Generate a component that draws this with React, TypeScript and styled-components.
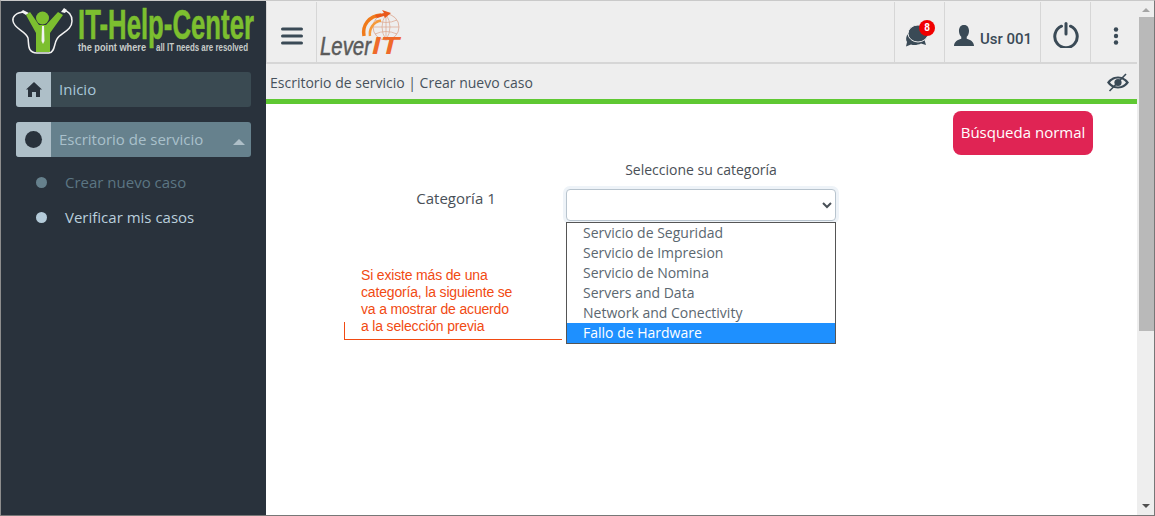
import styled, { createGlobalStyle } from 'styled-components'

const GlobalStyle = createGlobalStyle`
	html, body {
		margin: 0;
		padding: 0;
		overflow: hidden;
		background: #fff;
	}
	* {
		box-sizing: border-box;
	}
`

const Frame = styled.div`
	width: 1155px;
	height: 516px;
	display: flex;
	overflow: hidden;
	font-family: 'Open Sans', sans-serif;
	font-size: 14px;
	color: #495057;
	border-top: 1px solid #c9c9c9;
	border-left: 1px solid #8d8d8d;
	border-right: 1px solid #777;
	border-bottom: 1px solid #777;
`

const Sidebar = styled.aside`
	width: 265px;
	flex: none;
	background: #29323c;
	display: flex;
	flex-direction: column;
`

const LogoBox = styled.div`
	height: 71px;
`

const MenuItem = styled.div<{ $active?: boolean }>`
	display: flex;
	align-items: center;
	height: 35px;
	margin: 0 15px 15px 15px;
	border-radius: 3px;
	overflow: hidden;
	background: ${({ $active }) => ($active ? '#66818d' : '#3a4a52')};
	color: ${({ $active }) => ($active ? '#a9c0cb' : '#a8c6d8')};
	font-size: 15px;
`

const MenuIcon = styled.span`
	width: 35px;
	height: 35px;
	flex: none;
	background: #aebfc8;
	display: flex;
	align-items: center;
	justify-content: center;
`

const MenuDisc = styled.span`
	width: 17px;
	height: 17px;
	border-radius: 50%;
	background: #29323c;
`

const MenuLabel = styled.span`
	flex: 1;
	padding: 0 0 2px 8px;
`

const MenuCaret = styled.span`
	width: 0;
	height: 0;
	margin: 4px 6px 0 0;
	border-left: 6px solid transparent;
	border-right: 6px solid transparent;
	border-bottom: 6px solid #aebfc8;
`

const SubMenu = styled.div`
	display: flex;
	flex-direction: column;
	gap: 15px;
	padding: 0 0 0 35px;
`

const SubItem = styled.div<{ $dim?: boolean }>`
	display: flex;
	align-items: center;
	height: 20px;
	gap: 18px;
	font-size: 15px;
	color: ${({ $dim }) => ($dim ? '#5c7683' : '#b9cfdc')};
`

const SubDot = styled.span<{ $dim?: boolean }>`
	width: 11px;
	height: 11px;
	border-radius: 50%;
	background: ${({ $dim }) => ($dim ? '#66818d' : '#b4cbd9')};
`

const Main = styled.main`
	flex: 1;
	display: flex;
	flex-direction: column;
	min-width: 0;
`

const TopBar = styled.header`
	height: 63px;
	flex: none;
	display: flex;
	align-items: stretch;
	background: #eee;
	border-bottom: 2px solid #d6d6d6;
`

const TopCell = styled.div<{ $width: number; $shift?: number }>`
	width: ${({ $width }) => $width}px;
	flex: none;
	margin-top: 1px;
	padding: 7px 0 0 ${({ $shift }) => $shift ?? 0}px;
	border-left: 1px solid #d6d6d6;
	display: flex;
	align-items: center;
	justify-content: center;
	color: #3a4a56;
`

const LogoCell = styled.div`
	flex: 1;
	margin-top: 1px;
	border-left: 1px solid #d6d6d6;
	display: flex;
	align-items: center;
`

const BellWrap = styled.span`
	position: relative;
	display: flex;
	margin-right: 6px;
`

const Badge = styled.span`
	position: absolute;
	top: -5px;
	left: 14px;
	width: 16px;
	height: 16px;
	border-radius: 50%;
	background: #f00000;
	color: #fff;
	font-family: 'Roboto', sans-serif;
	font-size: 10px;
	font-weight: 700;
	line-height: 16px;
	text-align: center;
`

const UserName = styled.span`
	font-family: 'Roboto', sans-serif;
	font-size: 15px;
	font-weight: 500;
	margin-left: 5px;
	margin-top: 6px;
`

const PowerWrap = styled.span`
	display: flex;
	margin-bottom: 2px;
`

const Crumbs = styled.div`
	height: 35px;
	flex: none;
	background: #eee;
	display: flex;
	align-items: center;
	justify-content: space-between;
	padding: 2px 8px 0 4px;
	font-size: 14px;
	color: #47525c;
`

const GreenRule = styled.div`
	height: 5px;
	flex: none;
	background: #5fc832;
`

const Content = styled.section`
	flex: 1;
	background: #fff;
`

const ActionRow = styled.div`
	display: flex;
	justify-content: flex-end;
	padding: 7px 44px 0 0;
`

const SearchButton = styled.button`
	width: 140px;
	height: 44px;
	border: none;
	border-radius: 8px;
	background: #e02454;
	color: #fff;
	font-family: 'Open Sans', sans-serif;
	font-size: 15px;
	padding: 0 0 2px;
`

const FormGrid = styled.div`
	display: grid;
	grid-template-columns: 222px 270px;
	margin: 5px 0 0 78px;
`

const FormTitle = styled.div`
	grid-column: 2;
	height: 29px;
	text-align: center;
	font-size: 14px;
	line-height: 20px;
	color: #495057;
`

const FieldLabel = styled.label`
	text-align: center;
	font-size: 15px;
	line-height: 18px;
	color: #495057;
	padding-left: 2px;
`

const Select = styled.select`
	display: block;
	width: 270px;
	height: 32px;
	background-color: #fff;
	border: 1px solid #b8c4ce;
	border-radius: 4px;
	box-shadow: 0 0 0 3px #eef3f8;
	font-family: 'Open Sans', sans-serif;
	font-size: 14px;
	color: #495057;
	outline: none;
`

const Note = styled.div`
	position: relative;
	height: 122px;
	margin-top: 2px;
`

const NoteText = styled.p`
	position: absolute;
	left: 17px;
	top: 44px;
	margin: 0;
	font-family: 'Liberation Sans', sans-serif;
	font-size: 14px;
	letter-spacing: -0.17px;
	line-height: 17px;
	color: #f14a12;
	white-space: pre;
`

const NoteLine = styled.span`
	position: absolute;
	left: 0;
	top: 99px;
	width: 218px;
	height: 18px;
	border-left: 1px solid #f14a12;
	border-bottom: 1px solid #f14a12;
`

const OptionList = styled.ul`
	list-style: none;
	margin: 1px 0 0;
	padding: 0;
	width: 270px;
	height: 122px;
	border: 1px solid #555;
	background: #fff;
`

const OptionRow = styled.li<{ $selected?: boolean }>`
	height: 20px;
	line-height: 20px;
	padding-left: 16px;
	font-size: 14px;
	background: ${({ $selected }) => ($selected ? '#1e90ff' : 'transparent')};
	color: ${({ $selected }) => ($selected ? '#fff' : '#5b6770')};
`

const ScrollBar = styled.div`
	width: 17px;
	flex: none;
	margin-top: -1px;
	background: #eeeeee;
	display: flex;
	flex-direction: column;
	align-items: center;
`

const ScrollArrow = styled.span<{ $down?: boolean }>`
	width: 0;
	height: 0;
	margin: ${({ $down }) => ($down ? 'auto 0 7px 0' : '8px 0 5px 0')};
	border-left: 4px solid transparent;
	border-right: 4px solid transparent;
	${({ $down }) => ($down ? 'border-top: 4px solid #505050;' : 'border-bottom: 4px solid #a5a5a5;')}
`

const ScrollThumb = styled.span`
	width: 15px;
	height: 314px;
	background: #b9b9b9;
	margin-left: 2px;
`

const ITLogo = () => (
	<svg width='265' height='60' viewBox='1 1 265 60'>
		<path
			d='M25 12 C16 12 12 17 13 21 C14 29 26 31 28 38 C29 44 27 53 37 53 L49 53 C55 53 54 43 57 39 C60 33 72 31 72 21 C72 14 68 11 63 10'
			fill='none'
			stroke='#f2f2f2'
			strokeWidth='1.5'
		/>
		<path d='M23 10 L29 13 L26 15 L21 12 Z M64 8 L61 12 L65 13 L67 10 Z' fill='#f2f2f2' />
		<circle cx='42.5' cy='18' r='6.5' fill='#7cbf2f' />
		<path d='M26 15 L30 12 L39 25 L46 25 L58 12 L63 15 L50 33 L50 52 L36 52 L36 33 Z' fill='#7cbf2f' />
		<path d='M42 26 L44 26 L44.5 41 L43 44 L41.5 41 Z' fill='#f2f2f2' />
		<text
			x='78'
			y='39'
			fontFamily='Liberation Sans'
			fontWeight='700'
			fontSize='43'
			fill='#7cbf2f'
			stroke='#7cbf2f'
			strokeWidth='0.6'
			textLength='176'
			lengthAdjust='spacingAndGlyphs'
		>
			IT-Help-Center
		</text>
		<text
			x='78'
			y='51'
			fontFamily='Liberation Sans'
			fontWeight='700'
			fontSize='10.5'
			fill='#c7ccc9'
			textLength='68'
			lengthAdjust='spacingAndGlyphs'
		>
			the point where
		</text>
		<text
			x='156'
			y='51'
			fontFamily='Liberation Sans'
			fontWeight='700'
			fontSize='10.5'
			fill='#c7ccc9'
			textLength='92'
			lengthAdjust='spacingAndGlyphs'
		>
			all IT needs are resolved
		</text>
	</svg>
)

const LeverLogo = () => (
	<svg width='90' height='58' viewBox='317 3 90 58'>
		<circle cx='386' cy='27' r='13' fill='none' stroke='#dba58d' strokeWidth='0.8' />
		<path
			d='M373 27 H399 M386 14 V40 M375 20 Q386 25 397 20 M375 34 Q386 29 397 34 M386 14 Q378 27 386 40 M386 14 Q394 27 386 40'
			fill='none'
			stroke='#dba58d'
			strokeWidth='0.7'
		/>
		<path d='M364 36 C362 25 369 16 381 15' fill='none' stroke='#f07a1a' strokeWidth='3.5' />
		<path d='M370 36 C369 29 373 22 381 20.5' fill='none' stroke='#f59a3a' strokeWidth='2.5' />
		<path d='M375 15 L384 13 L382 10 L391 13 L385 18 L384 16 L377 18 Z' fill='#e9591c' />
		<text
			x='320'
			y='55'
			fontFamily='Liberation Sans'
			fontStyle='italic'
			fontSize='25'
			fill='#5a5a5a'
			stroke='#5a5a5a'
			strokeWidth='0.5'
			textLength='51'
			lengthAdjust='spacingAndGlyphs'
		>
			Lever
		</text>
		<text
			x='372'
			y='54'
			fontFamily='Liberation Sans'
			fontStyle='italic'
			fontWeight='700'
			fontSize='24'
			fill='#ef6a2a'
			textLength='27'
			lengthAdjust='spacingAndGlyphs'
		>
			IT
		</text>
	</svg>
)

const HomeIcon = () => (
	<svg width='16' height='15' viewBox='0 0 16 15'>
		<path d='M8 0 L16 7.5 L14 7.5 L14 15 L10 15 L10 10 L6 10 L6 15 L2 15 L2 7.5 L0 7.5 Z' fill='#29323c' />
	</svg>
)

const MenuBars = () => (
	<svg width='22' height='18' viewBox='0 0 22 18'>
		<path d='M1.5 2 H20.5 M1.5 9 H20.5 M1.5 16 H20.5' stroke='#3a4a56' strokeWidth='3' strokeLinecap='round' />
	</svg>
)

const ChatIcon = () => (
	<svg width='23' height='22' viewBox='0 0 23 22'>
		<path
			d='M3 9 C1 11 0.5 15 2 17 L1 21.5 L6 19.5 C9 20.5 13 20 16 18.5 L21 20 L19.5 15 C20 13 19 10 17 9 Z'
			fill='#3a4a56'
		/>
		<ellipse cx='13' cy='8.5' rx='10' ry='8.5' fill='#3a4a56' stroke='#eee' strokeWidth='1' />
	</svg>
)

const UserIcon = () => (
	<svg width='22' height='21' viewBox='0 0 22 23'>
		<path d='M11 0 C15 0 16.5 3 16.5 6.5 C16.5 9.5 15 12 14 13 L14 15 C18 16.5 21.5 17.5 22 23 L0 23 C0.5 17.5 4 16.5 8 15 L8 13 C7 12 5.5 9.5 5.5 6.5 C5.5 3 7 0 11 0 Z' fill='#3a4a56' />
	</svg>
)

const PowerIcon = () => (
	<svg width='26' height='26' viewBox='0 0 26 26'>
		<path d='M8.5 4.2 A11.2 11.2 0 1 0 17.5 4.2' fill='none' stroke='#3a4a56' strokeWidth='3' strokeLinecap='round' />
		<path d='M13 1.5 V12' stroke='#3a4a56' strokeWidth='3' strokeLinecap='round' />
	</svg>
)

const DotsIcon = () => (
	<svg width='6' height='18' viewBox='0 0 6 18'>
		<circle cx='3' cy='2.5' r='2.2' fill='#3a4a56' />
		<circle cx='3' cy='9' r='2.2' fill='#3a4a56' />
		<circle cx='3' cy='15.5' r='2.2' fill='#3a4a56' />
	</svg>
)

const EyeOffIcon = () => (
	<svg width='22' height='19' viewBox='0 0 22 19'>
		<path
			fillRule='evenodd'
			d='M11 3.5 C16 3.5 20 6.5 22 9.5 C20 12.5 16 15.5 11 15.5 C6 15.5 2 12.5 0 9.5 C2 6.5 6 3.5 11 3.5 Z M11 5.5 C7.5 5.5 4.5 7.5 3 9.5 C4.5 11.5 7.5 13.5 11 13.5 C14.5 13.5 17.5 11.5 19 9.5 C17.5 7.5 14.5 5.5 11 5.5 Z'
			fill='#3a4a56'
		/>
		<circle cx='11' cy='9.5' r='3.6' fill='#3a4a56' />
		<path d='M2.5 18 L19 1' stroke='#3a4a56' strokeWidth='1.6' />
	</svg>
)

const categories = [
	'Servicio de Seguridad',
	'Servicio de Impresion',
	'Servicio de Nomina',
	'Servers and Data',
	'Network and Conectivity',
]

const App = () => (
	<>
		<GlobalStyle />
		<Frame>
			<Sidebar>
				<LogoBox>
					<ITLogo />
				</LogoBox>
				<MenuItem>
					<MenuIcon>
						<HomeIcon />
					</MenuIcon>
					<MenuLabel>Inicio</MenuLabel>
				</MenuItem>
				<MenuItem $active>
					<MenuIcon>
						<MenuDisc />
					</MenuIcon>
					<MenuLabel>Escritorio de servicio</MenuLabel>
					<MenuCaret />
				</MenuItem>
				<SubMenu>
					<SubItem $dim>
						<SubDot $dim />
						Crear nuevo caso
					</SubItem>
					<SubItem>
						<SubDot />
						Verificar mis casos
					</SubItem>
				</SubMenu>
			</Sidebar>
			<Main>
				<TopBar>
					<TopCell $width={50}>
						<MenuBars />
					</TopCell>
					<LogoCell>
						<LeverLogo />
					</LogoCell>
					<TopCell $width={50}>
						<BellWrap>
							<ChatIcon />
							<Badge>8</Badge>
						</BellWrap>
					</TopCell>
					<TopCell $width={96}>
						<UserIcon />
						<UserName>Usr 001</UserName>
					</TopCell>
					<TopCell $width={50}>
						<PowerWrap>
							<PowerIcon />
						</PowerWrap>
					</TopCell>
					<TopCell $width={47} $shift={4}>
						<DotsIcon />
					</TopCell>
				</TopBar>
				<Crumbs>
					Escritorio de servicio | Crear nuevo caso
					<EyeOffIcon />
				</Crumbs>
				<GreenRule />
				<Content>
					<ActionRow>
						<SearchButton>Búsqueda normal</SearchButton>
					</ActionRow>
					<FormGrid>
						<FormTitle>Seleccione su categoría</FormTitle>
						<FieldLabel>Categoría 1</FieldLabel>
						<Select defaultValue=''>
							<option value='' />
						</Select>
						<Note>
							<NoteText>{'Si existe más de una\ncategoría, la siguiente se\nva a mostrar de acuerdo\na la selección previa'}</NoteText>
							<NoteLine />
						</Note>
						<OptionList>
							{categories.map(name => (
								<OptionRow key={name}>{name}</OptionRow>
							))}
							<OptionRow $selected>Fallo de Hardware</OptionRow>
						</OptionList>
					</FormGrid>
				</Content>
			</Main>
			<ScrollBar>
				<ScrollArrow />
				<ScrollThumb />
				<ScrollArrow $down />
			</ScrollBar>
		</Frame>
	</>
)

export default App
